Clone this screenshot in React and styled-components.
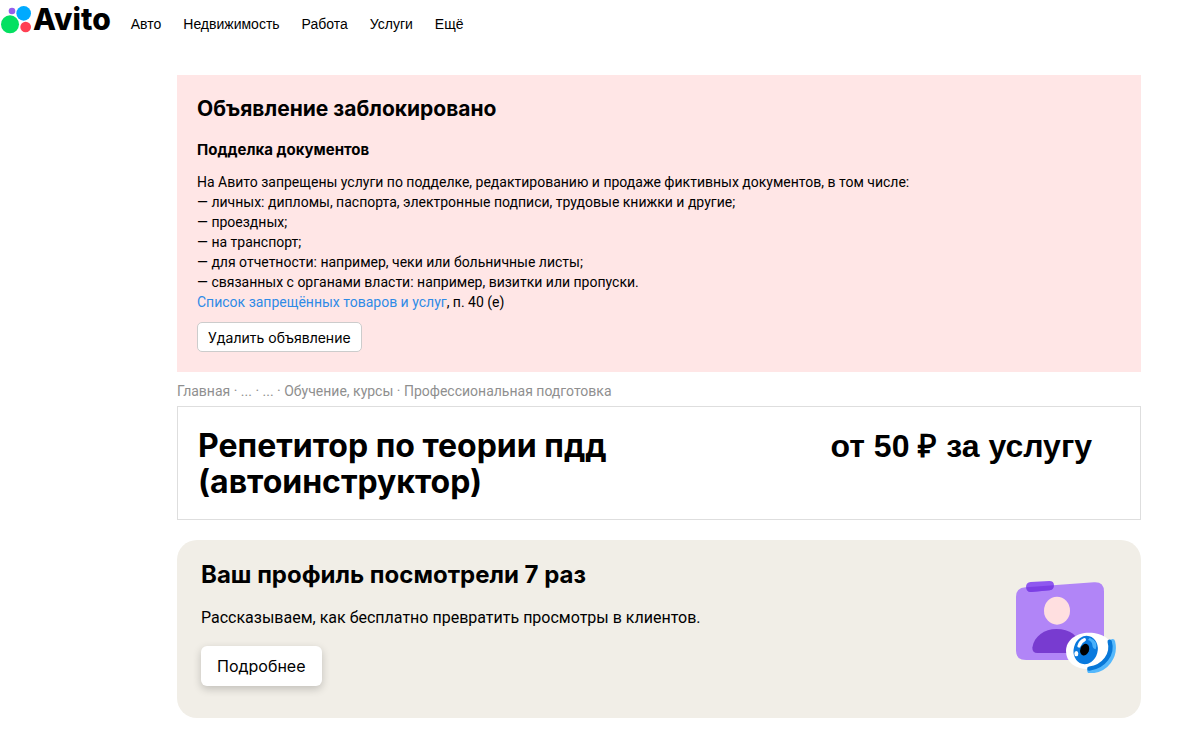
import React from 'react';
import styled, { createGlobalStyle } from 'styled-components';

const GlobalStyle = createGlobalStyle`
  * {
    box-sizing: border-box;
  }
  body {
    margin: 0;
    background: #fff;
    color: #000;
    font-family: Roboto, 'Open Sans', sans-serif;
    font-size: 14px;
    line-height: 20px;
  }
  h1, h2, h3, p {
    margin: 0;
  }
  h1, h2, h3, button {
    font-family: Inter, 'Open Sans', sans-serif;
  }
`;

const Header = styled.header`
  display: flex;
  align-items: center;
  padding: 4px 1px 0;
`;

const LogoLink = styled.a`
  display: flex;
  align-items: center;
  gap: 1px;
  color: #000;
  font-family: Inter, 'Open Sans', sans-serif;
  font-size: 30px;
  font-weight: 800;
  line-height: 29px;
  text-decoration: none;
`;

const Nav = styled.nav`
  display: flex;
  gap: 22px;
  margin-left: 20px;
  padding-top: 10px;
  font-family: 'Liberation Sans', Arial, sans-serif;
  a {
    color: #000;
    text-decoration: none;
  }
`;

const Page = styled.main`
  margin: 41px 60px 19px 177px;
`;

const Alert = styled.section`
  padding: 20px;
  background: #ffe6e6;
`;

const AlertTitle = styled.h2`
  font-size: 21px;
  line-height: 28px;
`;

const AlertReason = styled.h3`
  margin: 17px 0 12px;
  font-size: 15px;
  line-height: 20px;
`;

const RulesLink = styled.a`
  color: #2f8be6;
  text-decoration: none;
`;

const DeleteButton = styled.button`
  display: block;
  height: 30px;
  margin-top: 10px;
  padding: 0 10px;
  border: 1px solid #ccc;
  border-radius: 5px;
  background: #fff;
  color: #000;
  font-size: 14px;
  cursor: pointer;
`;

const Breadcrumbs = styled.nav`
  margin: 9px 0 5px;
  color: #8f8f8f;
  a {
    color: inherit;
    text-decoration: none;
  }
`;

const ItemHeader = styled.section`
  display: flex;
  align-items: flex-start;
  justify-content: space-between;
  padding: 21px 48px 19px 20px;
  border: 1px solid #dedede;
`;

const ItemTitle = styled.h1`
  max-width: 480px;
  font-size: 32px;
  line-height: 36px;
`;

const Price = styled.p`
  font-family: 'Liberation Sans', Arial, sans-serif;
  font-size: 32px;
  font-weight: 700;
  line-height: 36px;
  white-space: nowrap;
`;

const Promo = styled.section`
  display: flex;
  align-items: center;
  justify-content: space-between;
  margin-top: 20px;
  padding: 19px 24px 32px;
  border-radius: 20px;
  background: #f1eee7;
`;

const PromoTitle = styled.h2`
  font-size: 24px;
  line-height: 32px;
`;

const PromoText = styled.p`
  margin: 15px 0 16px;
  font-size: 16px;
  line-height: 24px;
`;

const MoreButton = styled.button`
  height: 40px;
  padding: 0 16px;
  border: 0;
  border-radius: 6px;
  background: #fff;
  box-shadow: 0 3px 8px rgba(0, 0, 0, 0.2);
  color: #000;
  font-size: 16px;
  cursor: pointer;
`;

const Art = styled.svg`
  flex-shrink: 0;
  margin-top: 8px;
`;

const sections = ['Авто', 'Недвижимость', 'Работа', 'Услуги', 'Ещё'];

const crumbs = ['Главная', '...', '...', 'Обучение, курсы', 'Профессиональная подготовка'];

const rules = [
  'На Авито запрещены услуги по подделке, редактированию и продаже фиктивных документов, в том числе:',
  '— личных: дипломы, паспорта, электронные подписи, трудовые книжки и другие;',
  '— проездных;',
  '— на транспорт;',
  '— для отчетности: например, чеки или больничные листы;',
  '— связанных с органами власти: например, визитки или пропуски.',
];

function LogoMark() {
  return (
    <svg width="31" height="29" viewBox="2 12 93 87" aria-hidden="true">
      <circle cx="35" cy="30" r="10" fill="#965eeb" />
      <circle cx="70" cy="37" r="22" fill="#00aaff" />
      <circle cx="29" cy="70" r="27" fill="#04e061" />
      <circle cx="76" cy="78" r="16" fill="#ff4053" />
    </svg>
  );
}

function ProfileArt() {
  return (
    <Art width="102" height="93" viewBox="45 30 306 279" aria-hidden="true">
      <path
        d="M76 52 L282 37 Q312 35 312 65 V242 Q312 270 284 270 H78 Q48 270 48 242 V80 Q48 54 76 52Z"
        fill="#b185f7"
      />
      <path
        d="M92 36 L148 33 Q162 33 162 46 Q162 60 149 61 L94 66 Q78 67 78 51 Q78 37 92 36Z"
        fill="#8f58f0"
      />
      <path
        d="M79 52 L161 46 Q162 60 149 61 L94 66 Q80 67 79 52Z"
        fill="#7c3fe4"
      />
      <ellipse cx="171" cy="122" rx="39" ry="42" fill="#ffdfe0" />
      <path d="M97 233 C102 198 134 177 169 177 C210 177 236 198 244 230 Q246 249 230 249 H112 Q97 249 97 233Z" fill="#783bd0" />
      <path d="M198 243 C198 210 229 188 267 188 C308 188 338 209 338 241 C338 275 306 297 264 297 C225 297 198 276 198 243Z" fill="#fff" />
      <path d="M337 216 C347 258 319 299 270 302" fill="none" stroke="#55b8fc" strokeWidth="17" strokeLinecap="round" />
      <path d="M329 215 C340 252 312 290 268 296" fill="none" stroke="#0878d8" strokeWidth="13" strokeLinecap="round" />
      <ellipse cx="257" cy="240" rx="36" ry="43" transform="rotate(15 257 240)" fill="#0a7ade" />
      <path d="M269 203 Q296 214 287 238 Q278 236 277 225 Q276 214 264 210Z" fill="#49b1fb" />
      <ellipse cx="254" cy="239" rx="13" ry="18" transform="rotate(20 254 239)" fill="#000" />
      <path d="M237 228 Q240 215 253 209" fill="none" stroke="#fff" strokeWidth="10" strokeLinecap="round" />
      <ellipse cx="229" cy="251" rx="6" ry="8" fill="#fff" />
    </Art>
  );
}

function App() {
  return (
    <>
      <GlobalStyle />
      <Header>
        <LogoLink href="#">
          <LogoMark />
          Avito
        </LogoLink>
        <Nav>
          {sections.map((name) => (
            <a href="#" key={name}>
              {name}
            </a>
          ))}
        </Nav>
      </Header>
      <Page>
        <Alert>
          <AlertTitle>Объявление заблокировано</AlertTitle>
          <AlertReason>Подделка документов</AlertReason>
          {rules.map((rule) => (
            <p key={rule}>{rule}</p>
          ))}
          <p>
            <RulesLink href="#">Список запрещённых товаров и услуг</RulesLink>, п. 40 (е)
          </p>
          <DeleteButton type="button">Удалить объявление</DeleteButton>
        </Alert>
        <Breadcrumbs>
          {crumbs.map((crumb, i) => (
            <React.Fragment key={i}>
              {i > 0 && ' · '}
              <a href="#">{crumb}</a>
            </React.Fragment>
          ))}
        </Breadcrumbs>
        <ItemHeader>
          <ItemTitle>Репетитор по теории пдд (автоинструктор)</ItemTitle>
          <Price>от 50 ₽ за услугу</Price>
        </ItemHeader>
        <Promo>
          <div>
            <PromoTitle>Ваш профиль посмотрели 7 раз</PromoTitle>
            <PromoText>Рассказываем, как бесплатно превратить просмотры в клиентов.</PromoText>
            <MoreButton type="button">Подробнее</MoreButton>
          </div>
          <ProfileArt />
        </Promo>
      </Page>
    </>
  );
}

export default App;
